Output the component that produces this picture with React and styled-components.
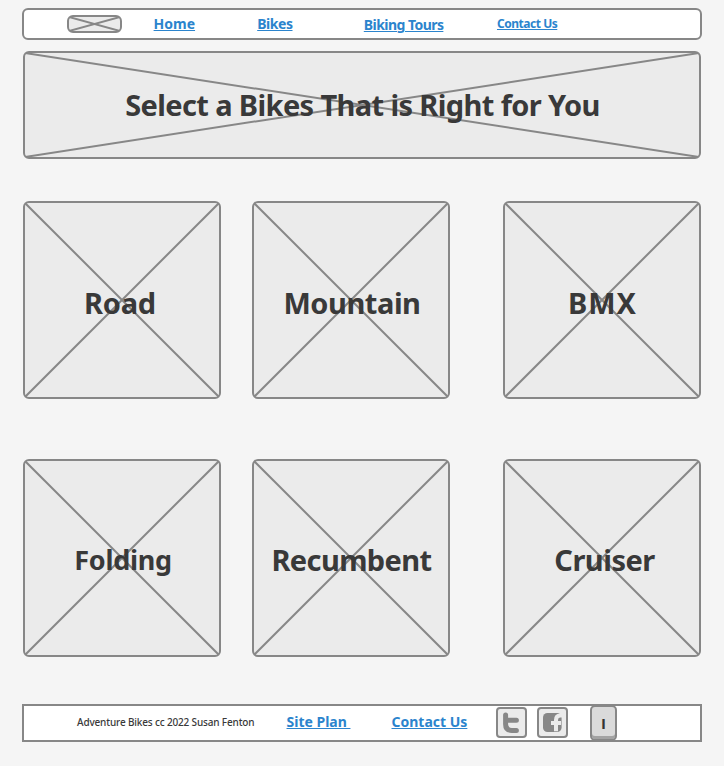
import React from 'react';
import styled, { createGlobalStyle } from 'styled-components';

const line = '#878787';
const fill = '#ebebeb';
const ink = '#393939';

const GlobalStyle = createGlobalStyle`
  * { box-sizing: border-box; }
  body {
    margin: 0;
    background: #f5f5f5;
    color: ${ink};
    font-family: "Noto Sans", "Open Sans", sans-serif;
  }
`;

const Page = styled.div`
  display: flex;
  flex-direction: column;
  width: 724px;
  height: 766px;
  padding: 8px 22px 24px;
  overflow: hidden;
`;

const Bar = styled.div`
  display: flex;
  align-items: center;
  flex: none;
  background: #fff;
  border: 2px solid ${line};
`;

const NavBar = styled(Bar)`
  height: 32px;
  padding-left: 43px;
  border-radius: 6px;
`;

const FooterBar = styled(Bar)`
  height: 38px;
  margin-top: 47px;
  padding: 0 0 2px 53px;
`;

const Link = styled.a`
  flex: none;
  width: ${p => p.$slot}px;
  padding-top: ${p => p.$drop || 0}px;
  color: #2b84cd;
  font-size: ${p => p.$size || 14}px;
  font-weight: 700;
  line-height: 20px;
  letter-spacing: ${p => p.$tracking || 0}px;
  white-space: pre;
  text-decoration: underline;
  text-decoration-thickness: 1px;
  text-underline-offset: 1px;
`;

const Copyright = styled.span`
  flex: none;
  width: 209.5px;
  font-size: 10px;
  font-weight: 500;
  line-height: 20px;
  letter-spacing: -0.16px;
  white-space: nowrap;
`;

const Frame = styled.div`
  position: relative;
  display: flex;
  align-items: center;
  justify-content: center;
  flex: none;
  background: ${fill};
  border: 2px solid ${line};
  border-radius: 6px;
`;

const LogoFrame = styled(Frame)`
  width: 55px;
  height: 18px;
  margin-right: 31.6px;
`;

const BannerFrame = styled(Frame)`
  height: 108px;
  margin: 11px 1px 0;
`;

const TileGrid = styled.div`
  display: grid;
  grid-template-columns: 229px 251px 198px;
  row-gap: 60px;
  margin: 42px 1px 0;
`;

const TileFrame = styled(Frame)`
  width: 198px;
  height: 198px;
`;

const Cross = styled.svg`
  position: absolute;
  inset: 0;
  width: 100%;
  height: 100%;
  stroke: ${line};
  stroke-width: 2;
`;

const Label = styled.h2`
  position: relative;
  margin: 0;
  padding-left: ${p => Math.max(p.$dx || 0, 0)}px;
  padding-right: ${p => Math.max(-(p.$dx || 0), 0)}px;
  padding-top: ${p => p.$drop || 0}px;
  font-size: ${p => p.$size || 29}px;
  font-weight: 700;
  line-height: 40px;
  letter-spacing: ${p => p.$tracking || 0}px;
  white-space: nowrap;
`;

const SocialButton = styled.button`
  display: flex;
  flex: none;
  width: 31px;
  height: 31px;
  margin-right: 10px;
  padding: 0;
  background: ${fill};
  border: 2px solid ${line};
  border-radius: 4px;
`;

const KeyButton = styled.button`
  flex: none;
  width: 27px;
  height: 36px;
  margin: 2px 0 0 12px;
  padding: 0;
  background: #dadada;
  border: 2px solid ${line};
  border-radius: 5px;
  box-shadow: inset 0 -3px 0 #a3a3a3;
  color: #333;
  font: 700 15px/29px "Open Sans", sans-serif;
`;

const Crossed = () => (
  <Cross aria-hidden="true">
    <line x1="0" y1="0" x2="100%" y2="100%" />
    <line x1="0" y1="100%" x2="100%" y2="0" />
  </Cross>
);

const TwitterIcon = () => (
  <svg width="27" height="27" viewBox="0 0 27 27">
    <path d="M7.6 6v9.2q0 6.2 6.2 6.2h4.6M8 11.3h10.4" fill="none" stroke={line} strokeWidth="5" strokeLinecap="round" />
  </svg>
);

const FacebookIcon = () => (
  <svg width="27" height="27" viewBox="0 0 27 27">
    <rect x="4" y="4" width="18.6" height="19" rx="4.5" fill={line} />
    <path d="M17 22.2V11q0-4.6 4-4.6h2.6M12 14h10" fill="none" stroke={fill} strokeWidth="4" />
  </svg>
);

const tiles = [
  { name: 'Road', tracking: -0.25, dx: -4, drop: 6 },
  { name: 'Mountain', tracking: -0.45, dx: 2, drop: 6 },
  { name: 'BMX', tracking: 1, dx: 1, drop: 6 },
  { name: 'Folding', tracking: -0.3, dx: 2, drop: 3, size: 27 },
  { name: 'Recumbent', tracking: -0.6, dx: 1, drop: 4 },
  { name: 'Cruiser', tracking: -0.5, dx: 5, drop: 4 },
];

export default function App() {
  return (
    <Page>
      <GlobalStyle />
      <NavBar as="nav">
        <LogoFrame><Crossed /></LogoFrame>
        <Link $slot={103.6}>Home</Link>
        <Link $slot={106.6} $tracking={-0.45}>Bikes</Link>
        <Link $slot={133.2} $tracking={-0.55} $drop={2}>Biking Tours</Link>
        <Link $slot={70} $size={12} $tracking={-0.47}>Contact Us</Link>
      </NavBar>
      <BannerFrame>
        <Crossed />
        <Label as="h1" $tracking={-0.62} $dx={1}>Select a Bikes That is Right for You</Label>
      </BannerFrame>
      <TileGrid>
        {tiles.map(t => (
          <TileFrame key={t.name}>
            <Crossed />
            <Label $tracking={t.tracking} $dx={t.dx} $drop={t.drop} $size={t.size}>{t.name}</Label>
          </TileFrame>
        ))}
      </TileGrid>
      <FooterBar as="footer">
        <Copyright>Adventure Bikes cc 2022 Susan Fenton</Copyright>
        <Link $slot={105}>{'Site Plan '}</Link>
        <Link $slot={104.5}>Contact Us</Link>
        <SocialButton aria-label="Twitter"><TwitterIcon /></SocialButton>
        <SocialButton aria-label="Facebook"><FacebookIcon /></SocialButton>
        <KeyButton>I</KeyButton>
      </FooterBar>
    </Page>
  );
}
